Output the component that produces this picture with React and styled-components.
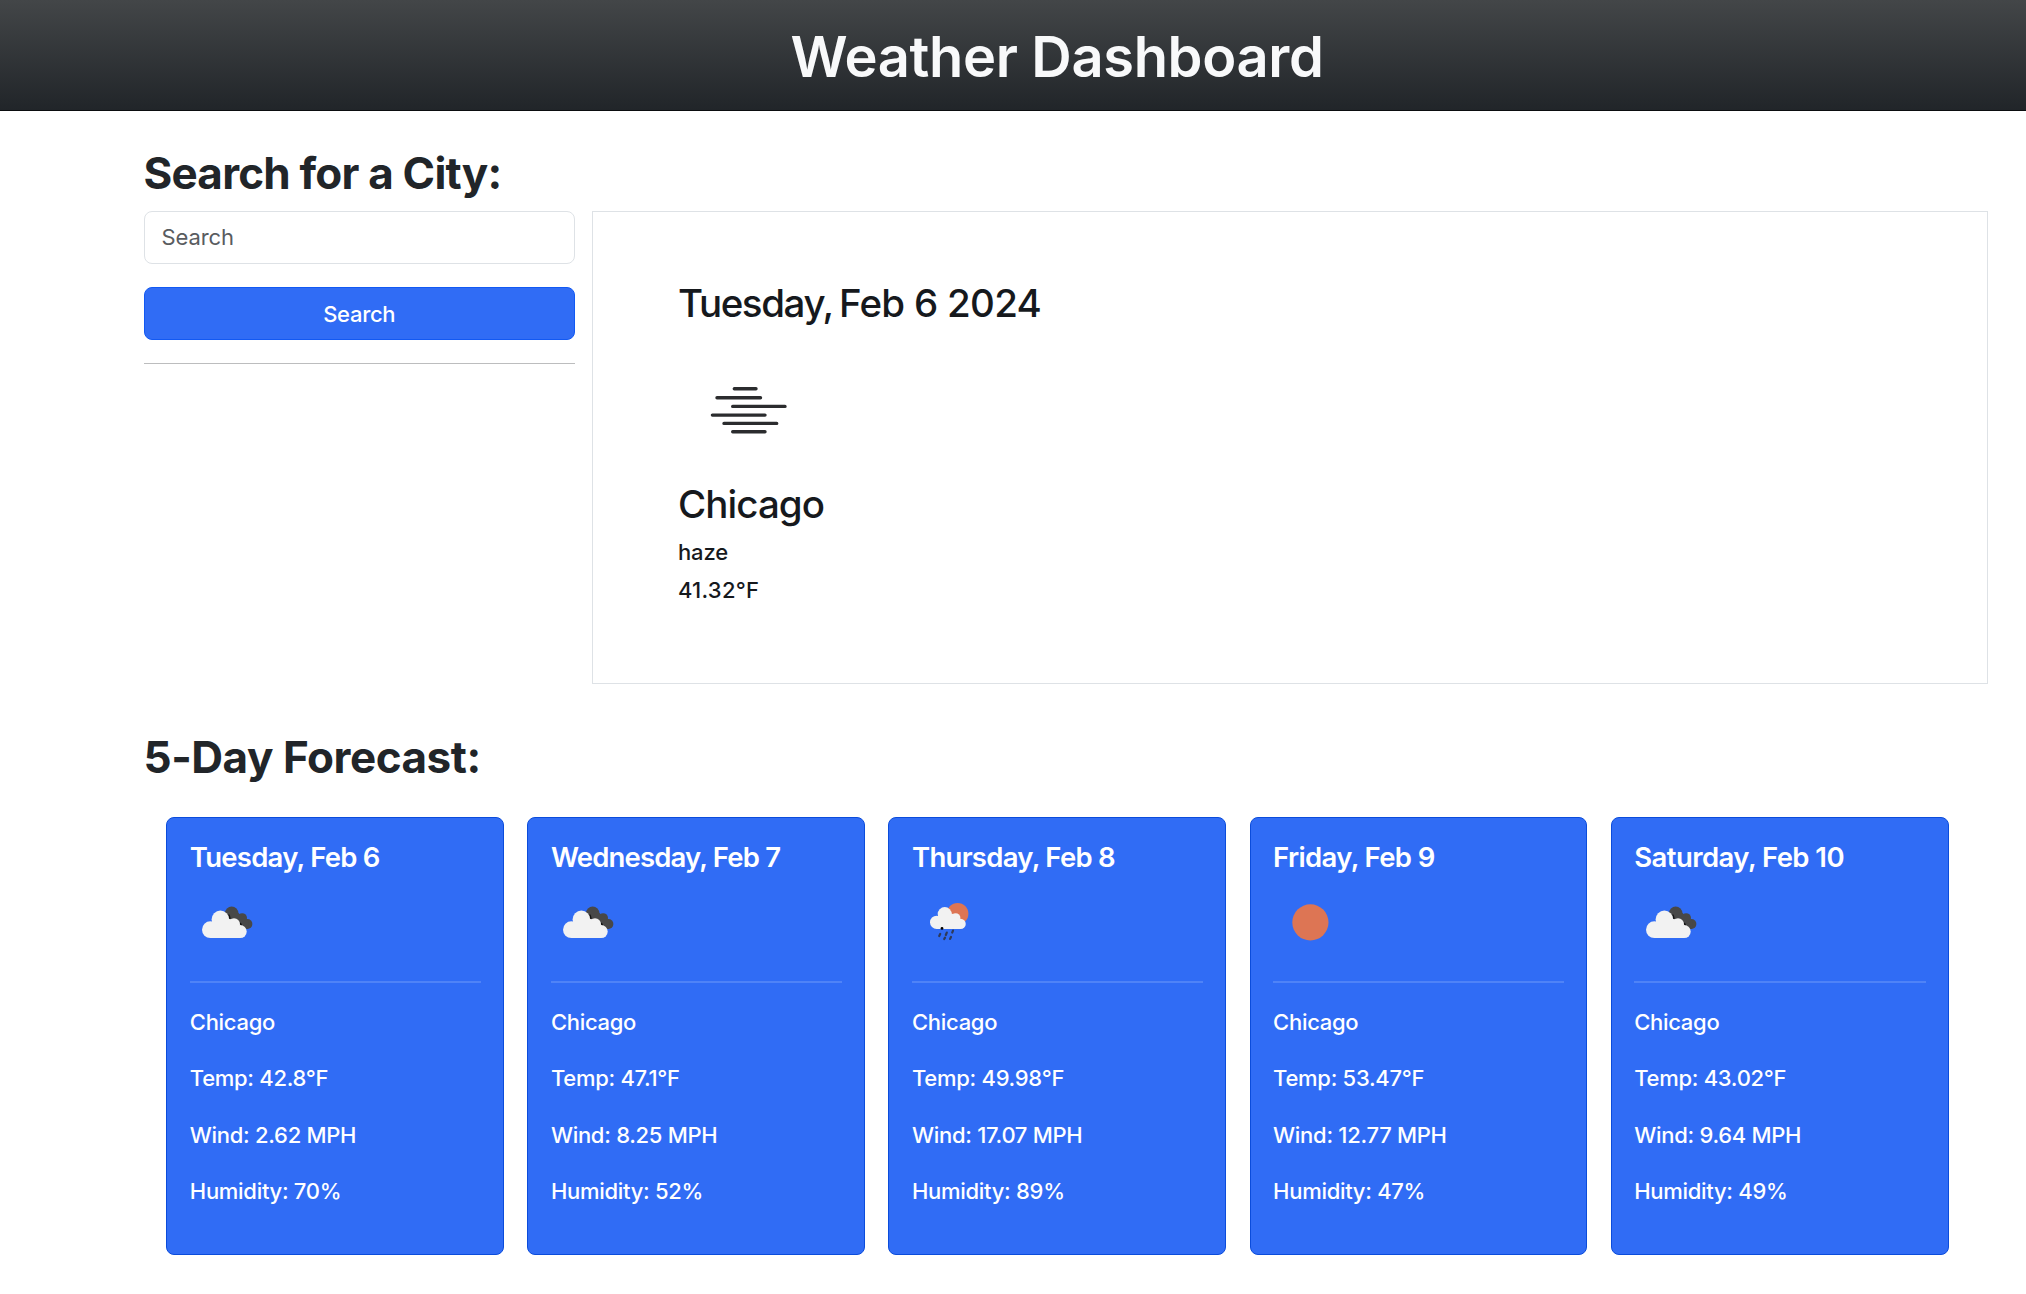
import React from "react";
import styled, { createGlobalStyle } from "styled-components";

const GlobalStyle = createGlobalStyle`
  *, *::before, *::after { box-sizing: border-box; }
  body {
    margin: 0;
    background: #fff;
    color: #16191d;
    font-family: Inter, "Liberation Sans", sans-serif;
    font-size: 22px;
    font-weight: 500;
    line-height: 34px;
    letter-spacing: -0.29px;
  }
  h1, h2, h3, h5, p { margin: 0; }
`;

const Header = styled.header`
  display: flex;
  justify-content: center;
  height: 111px;
  padding: 23px 0 0 88px;
  background: linear-gradient(180deg, #434648, #212529);
  border-bottom: 1px solid #0b0d0f;
`;

const PageTitle = styled.h1`
  color: #f8f9fa;
  font-size: 56px;
  font-weight: 600;
  line-height: 68px;
  letter-spacing: -0.35px;
`;

const Main = styled.main`
  padding: 35px 38px 0 143.5px;
`;

const SectionTitle = styled.h2`
  color: #212529;
  font-size: 44px;
  font-weight: 700;
  line-height: 54px;
  letter-spacing: ${(p) => p.$tracking}px;
`;

const TopRow = styled.div`
  display: grid;
  grid-template-columns: 431.5px 1fr;
  column-gap: 17px;
  margin: 11px 0 46px;
`;

const SearchForm = styled.form`
  display: flex;
  flex-direction: column;
  gap: 23px;
`;

const SearchInput = styled.input`
  height: 53px;
  padding: 0 17px 1px;
  border: 1px solid #dee2e6;
  border-radius: 8px;
  background: #fff;
  font: inherit;
  font-weight: 400;
  letter-spacing: -0.1px;
  outline: none;
  &::placeholder { color: #595c5f; opacity: 1; }
`;

const SearchButton = styled.button`
  height: 53px;
  padding: 0;
  border: 1px solid #1259f3;
  border-radius: 8px;
  background: #306cf5;
  color: #fff;
  font: inherit;
  letter-spacing: inherit;
`;

const FormRule = styled.hr`
  width: 100%;
  height: 1px;
  margin: 0;
  border: 0;
  background: #bcbdbe;
`;

const CurrentPanel = styled.section`
  height: 473px;
  padding: 68px 85px 0;
  border: 1px solid #dee2e6;
`;

const PanelHeading = styled.h3`
  font-size: 38.5px;
  font-weight: 500;
  line-height: 46px;
  letter-spacing: ${(p) => p.$tracking}px;
`;

const Weekday = styled.span`
  margin-right: -3.5px;
  letter-spacing: -1.4px;
`;

const HazeArt = styled.svg`
  display: block;
  width: 141px;
  height: 141px;
  margin-top: 14px;
`;

const Reading = styled.p`
  margin-top: ${(p) => p.$gap}px;
  letter-spacing: ${(p) => p.$tracking}px;
`;

const CardGrid = styled.div`
  display: grid;
  grid-template-columns: repeat(5, 1fr);
  column-gap: 23.3px;
  padding: 32.5px 39.5px 0 22.8px;
`;

const Card = styled.article`
  height: 438px;
  padding: 22px 22px 22px 22.5px;
  border: 1px solid #0b4cdb;
  border-radius: 8px;
  background: #306cf5;
  color: #fff;
`;

const CardTitle = styled.h5`
  font-size: 27.5px;
  font-weight: 600;
  line-height: 34px;
  letter-spacing: ${(p) => p.$tracking}px;
  white-space: nowrap;
`;

const CardArt = styled.svg`
  display: block;
  width: 71px;
  height: 71px;
  margin-top: 13.5px;
`;

const CardRule = styled.hr`
  height: 2px;
  margin: 23px 0 22px;
  border: 0;
  background: #4f83f7;
`;

const CardBody = styled.div`
  display: flex;
  flex-direction: column;
  gap: 22.4px;
`;

const CloudShape = () => (
  <g fill="#f2f2f2">
    <circle cx="20.4" cy="42.7" r="8.4" />
    <circle cx="30.4" cy="32.4" r="8.8" />
    <circle cx="44" cy="37.2" r="6" />
    <circle cx="50.2" cy="44.6" r="6.5" />
    <path d="M20.4 51.1V36L30 30l14 3 6 8v10.1z" />
  </g>
);

const CloudsIcon = () => (
  <CardArt viewBox="0 0 71 71">
    <g fill="#484848">
      <circle cx="41.7" cy="26.2" r="6.7" />
      <circle cx="52.2" cy="31" r="4.8" />
      <circle cx="57.4" cy="37" r="5" />
      <path d="M38 28l8-4 6 5 7 5-1 8-8-1z" />
    </g>
    <path d="M38.6 27.6q1.4 2 1.4 4.2M50.2 36q1.4 1.6 1.2 3.4" fill="none" stroke="#111" strokeWidth="1.4" />
    <CloudShape />
  </CardArt>
);

const RainIcon = () => (
  <CardArt viewBox="0 0 71 71">
    <circle cx="45.6" cy="26.7" r="10.8" fill="#dd7554" />
    <g transform="translate(8.4 1.2) scale(.8)">
      <CloudShape />
    </g>
    <circle cx="30" cy="41.4" r="1.4" fill="#000" />
    <path
      d="M28.2 47l-1 2M34.8 45.6l-1 2.4M41 43.6l-.8 2M33 50.6l-.8 1.4M39 50l-.9 1.9"
      fill="none"
      stroke="#2f3a58"
      strokeWidth="2.2"
      strokeLinecap="round"
    />
  </CardArt>
);

const SunIcon = () => (
  <CardArt viewBox="0 0 71 71">
    <circle cx="37.4" cy="35.4" r="18.1" fill="#dd7554" />
  </CardArt>
);

const HazeIcon = () => (
  <HazeArt viewBox="0 0 141 141">
    <path
      d="M56.3 48.7H78M39 57.7H82.5M54.7 66.4H107M34.4 75.1H87M46 83.4H98.7M54.7 91.8H87"
      fill="none"
      stroke="#2b2c2e"
      strokeWidth="3.4"
      strokeLinecap="round"
    />
  </HazeArt>
);

const ICONS = { clouds: CloudsIcon, rain: RainIcon, sun: SunIcon };

const FORECAST = [
  { day: "Tuesday, Feb 6", tracking: -0.74, icon: "clouds", temp: "42.8", wind: "2.62", humidity: 70 },
  { day: "Wednesday, Feb 7", tracking: -0.82, icon: "clouds", temp: "47.1", wind: "8.25", humidity: 52 },
  { day: "Thursday, Feb 8", tracking: -0.72, icon: "rain", temp: "49.98", wind: "17.07", humidity: 89 },
  { day: "Friday, Feb 9", tracking: -0.64, icon: "sun", temp: "53.47", wind: "12.77", humidity: 47 },
  { day: "Saturday, Feb 10", tracking: -0.55, icon: "clouds", temp: "43.02", wind: "9.64", humidity: 49 },
];

function ForecastCard({ day, tracking, icon, temp, wind, humidity }) {
  const Icon = ICONS[icon];
  return (
    <Card>
      <CardTitle $tracking={tracking}>{day}</CardTitle>
      <Icon />
      <CardRule />
      <CardBody>
        <p>Chicago</p>
        <p>{`Temp: ${temp}°F`}</p>
        <p>{`Wind: ${wind} MPH`}</p>
        <p>{`Humidity: ${humidity}%`}</p>
      </CardBody>
    </Card>
  );
}

export default function App() {
  return (
    <>
      <GlobalStyle />
      <Header>
        <PageTitle>Weather Dashboard</PageTitle>
      </Header>
      <Main>
        <SectionTitle $tracking={-0.79}>Search for a City:</SectionTitle>
        <TopRow>
          <SearchForm onSubmit={(e) => e.preventDefault()}>
            <SearchInput placeholder="Search" />
            <SearchButton type="submit">Search</SearchButton>
            <FormRule />
          </SearchForm>
          <CurrentPanel>
            <PanelHeading $tracking={-0.73}>
              <Weekday>Tuesday,</Weekday> Feb 6 2024
            </PanelHeading>
            <HazeIcon />
            <PanelHeading $tracking={-0.95}>Chicago</PanelHeading>
            <Reading $gap={8} $tracking={-0.15}>haze</Reading>
            <Reading $gap={4} $tracking={0.25}>41.32°F</Reading>
          </CurrentPanel>
        </TopRow>
        <SectionTitle $tracking={-0.46}>5-Day Forecast:</SectionTitle>
        <CardGrid>
          {FORECAST.map((f) => (
            <ForecastCard key={f.day} {...f} />
          ))}
        </CardGrid>
      </Main>
    </>
  );
}
